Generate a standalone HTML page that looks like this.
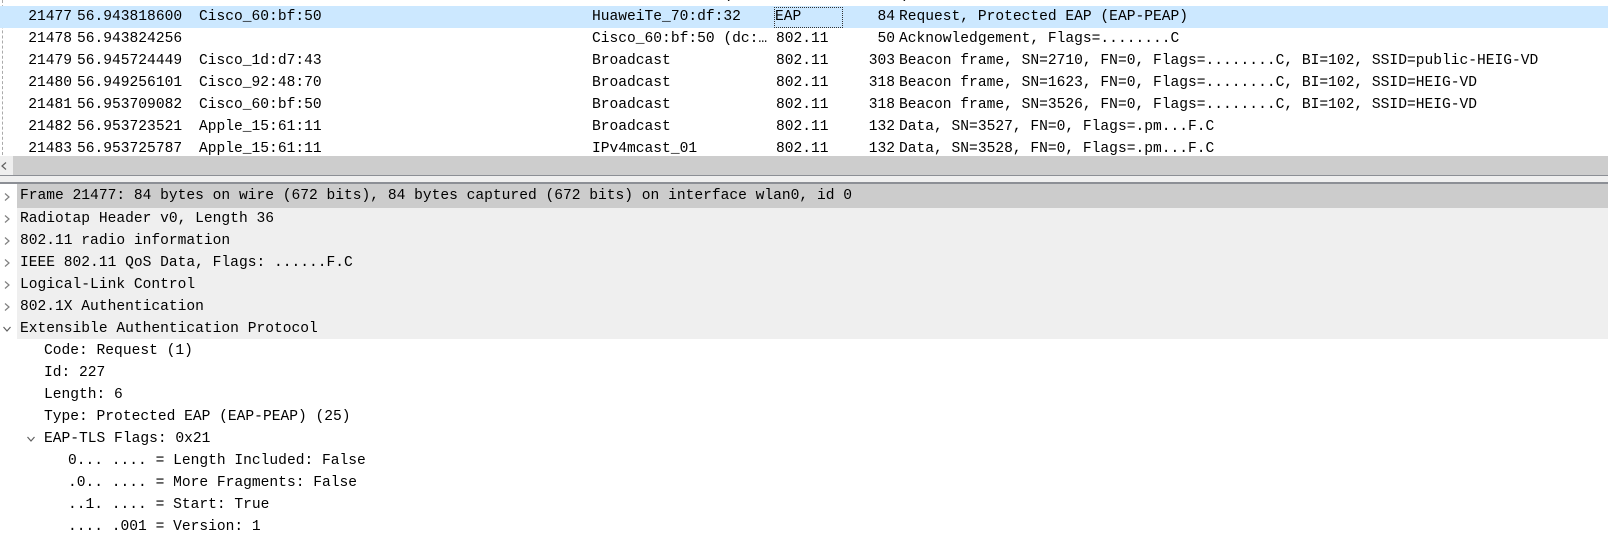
<!DOCTYPE html>
<html><head><meta charset="utf-8"><style>
body{margin:0;width:1608px;height:548px;overflow:hidden;background:#fff;font-family:"Liberation Mono",monospace;font-size:14.6px;color:#000;position:relative}
.r{position:absolute;left:0;width:1608px;height:22px;line-height:22px;white-space:pre}
.r span{position:absolute;top:0}
.no{right:calc(1608px - 72px);text-align:right}
.len{right:calc(1608px - 895px);text-align:right}
.sel{background:#cce8ff}
.d{position:absolute;left:17px;width:1591px;height:22px;line-height:22px;white-space:pre}
.c{position:absolute;left:2px;width:10px;height:10px}
</style></head><body>
<svg width="0" height="0" style="position:absolute"><defs>
<symbol id="cr" viewBox="0 0 10 10"><polyline points="3,1.5 7,5 3,8.5" fill="none" stroke="#808080" stroke-width="1.2"/></symbol>
<symbol id="cd" viewBox="0 0 10 10"><polyline points="1.5,3 5,7 8.5,3" fill="none" stroke="#606060" stroke-width="1.2"/></symbol>
</defs></svg>
<div style="position:absolute;left:2px;top:0;height:155px;border-left:1px dashed #aaa"></div>
<div class="r" style="top:-16px"><span style="left:592px">Cisco_60:bf:50 (dc:…</span><span style="left:776px">802.11</span><span style="left:899px">(</span></div>
<div class="r sel" style="top:6px"><span class="no">21477</span><span style="left:77px">56.943818600</span><span style="left:199px">Cisco_60:bf:50</span><span style="left:592px">HuaweiTe_70:df:32</span><span style="left:774px;top:1px;width:67px;height:19px;border:1px dotted #333;line-height:19px">EAP</span><span class="len">84</span><span style="left:899px">Request, Protected EAP (EAP-PEAP)</span></div>
<div class="r" style="top:28px"><span class="no">21478</span><span style="left:77px">56.943824256</span><span style="left:592px">Cisco_60:bf:50 (dc:…</span><span style="left:776px">802.11</span><span class="len">50</span><span style="left:899px">Acknowledgement, Flags=........C</span></div>
<div class="r" style="top:50px"><span class="no">21479</span><span style="left:77px">56.945724449</span><span style="left:199px">Cisco_1d:d7:43</span><span style="left:592px">Broadcast</span><span style="left:776px">802.11</span><span class="len">303</span><span style="left:899px">Beacon frame, SN=2710, FN=0, Flags=........C, BI=102, SSID=public-HEIG-VD</span></div>
<div class="r" style="top:72px"><span class="no">21480</span><span style="left:77px">56.949256101</span><span style="left:199px">Cisco_92:48:70</span><span style="left:592px">Broadcast</span><span style="left:776px">802.11</span><span class="len">318</span><span style="left:899px">Beacon frame, SN=1623, FN=0, Flags=........C, BI=102, SSID=HEIG-VD</span></div>
<div class="r" style="top:94px"><span class="no">21481</span><span style="left:77px">56.953709082</span><span style="left:199px">Cisco_60:bf:50</span><span style="left:592px">Broadcast</span><span style="left:776px">802.11</span><span class="len">318</span><span style="left:899px">Beacon frame, SN=3526, FN=0, Flags=........C, BI=102, SSID=HEIG-VD</span></div>
<div class="r" style="top:116px"><span class="no">21482</span><span style="left:77px">56.953723521</span><span style="left:199px">Apple_15:61:11</span><span style="left:592px">Broadcast</span><span style="left:776px">802.11</span><span class="len">132</span><span style="left:899px">Data, SN=3527, FN=0, Flags=.pm...F.C</span></div>
<div class="r" style="top:138px;height:18px;overflow:hidden"><span class="no">21483</span><span style="left:77px">56.953725787</span><span style="left:199px">Apple_15:61:11</span><span style="left:592px">IPv4mcast_01</span><span style="left:776px">802.11</span><span class="len">132</span><span style="left:899px">Data, SN=3528, FN=0, Flags=.pm...F.C</span></div>
<div style="position:absolute;left:0;top:156px;width:1608px;height:19px;background:#cdcdcd"></div>
<div style="position:absolute;left:0;top:156px;width:13px;height:19px;background:#efefef"><svg width="10" height="10" style="position:absolute;left:0;top:5px"><polyline points="6,1.5 2,5 6,8.5" fill="none" stroke="#606060" stroke-width="1.2"/></svg></div>
<div style="position:absolute;left:0;top:175px;width:1608px;height:1px;background:#8c8f95"></div>
<div style="position:absolute;left:0;top:176px;width:1608px;height:7px;background:#efefef"></div>
<div style="position:absolute;left:0;top:182px;width:1608px;height:1.5px;background:#8c8f95"></div>
<div style="position:absolute;left:17px;top:184px;width:1591px;height:155px;background:#efefef"></div>
<div class="d" style="top:185px;height:23px;line-height:23px;background:#cccccc;padding-left:3px">Frame 21477: 84 bytes on wire (672 bits), 84 bytes captured (672 bits) on interface wlan0, id 0</div>
<div style="position:absolute;left:17px;top:184px;width:1591px;height:1px;background:#cccccc"></div>
<svg class="c" style="top:192px"><use href="#cr"/></svg>
<div class="d" style="top:208px;left:20px">Radiotap Header v0, Length 36</div><svg class="c" style="top:214px"><use href="#cr"/></svg>
<div class="d" style="top:230px;left:20px">802.11 radio information</div><svg class="c" style="top:236px"><use href="#cr"/></svg>
<div class="d" style="top:252px;left:20px">IEEE 802.11 QoS Data, Flags: ......F.C</div><svg class="c" style="top:258px"><use href="#cr"/></svg>
<div class="d" style="top:274px;left:20px">Logical-Link Control</div><svg class="c" style="top:280px"><use href="#cr"/></svg>
<div class="d" style="top:296px;left:20px">802.1X Authentication</div><svg class="c" style="top:302px"><use href="#cr"/></svg>
<div class="d" style="top:318px;left:20px">Extensible Authentication Protocol</div><svg class="c" style="top:324px"><use href="#cd"/></svg>
<div class="d" style="top:340px;left:44px">Code: Request (1)</div>
<div class="d" style="top:362px;left:44px">Id: 227</div>
<div class="d" style="top:384px;left:44px">Length: 6</div>
<div class="d" style="top:406px;left:44px">Type: Protected EAP (EAP-PEAP) (25)</div>
<div class="d" style="top:428px;left:44px">EAP-TLS Flags: 0x21</div><svg class="c" style="top:434px;left:26px"><use href="#cd"/></svg>
<div class="d" style="top:450px;left:68px">0... .... = Length Included: False</div>
<div class="d" style="top:472px;left:68px">.0.. .... = More Fragments: False</div>
<div class="d" style="top:494px;left:68px">..1. .... = Start: True</div>
<div class="d" style="top:516px;left:68px">.... .001 = Version: 1</div>
</body></html>
